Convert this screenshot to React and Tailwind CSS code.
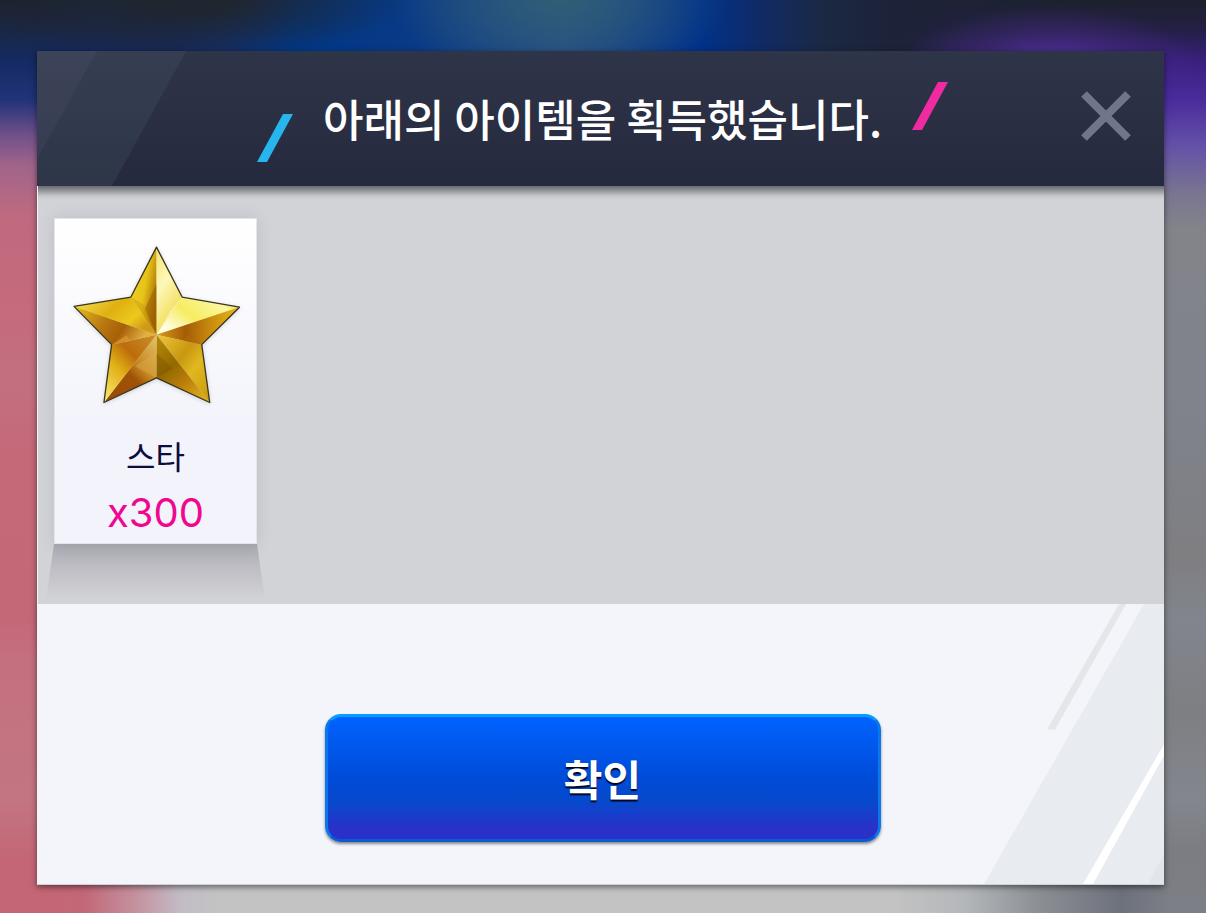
import React from "react";

const Backdrop = () => (
    <div className="absolute inset-0 overflow-hidden" aria-hidden="true">
        <div className="flex h-full">
            <div className="w-1/2 bg-[linear-gradient(to_bottom,#1c222e_0,#1a2642_28px,#142a62_60px,#223378_100px,#70508a_135px,#a0648a_165px,#bf6a80_215px,#c56a7c_300px,#c27080_380px,#c56878_460px,#c46878_620px,#c4707f_660px,#c37582_800px,#c46676_860px,#c46676_100%)]" />
            <div className="w-1/2 bg-[linear-gradient(to_bottom,#1c212d_0,#241f45_30px,#3a2080_62px,#4a2c9c_100px,#6450a8_145px,#7a7690_195px,#83848a_230px,#80838c_400px,#7f7f82_560px,#82858e_620px,#7e7f82_710px,#83868e_800px,#7c7d82_850px,#7c7f86_100%)]" />
        </div>
        {/* Top glow: navy, teal and purple lights */}
        <div className="absolute inset-x-0 top-0 h-20 bg-[radial-gradient(170px_80px_at_560px_0,#2f5e76_0%,#2f5e7680_50%,transparent_100%),radial-gradient(150px_60px_at_1050px_66px,#5530a0_0%,#4a2c8880_50%,transparent_100%),radial-gradient(220px_60px_at_190px_0,#1f2630_20%,#1f263080_60%,transparent_100%),linear-gradient(to_right,transparent_3%,#16285a_14%,#122f6c_19%,#003787_24%,#083a86_34%,#274c86_47%,#00328a_58%,#102a66_63%,#1a2944_68%,#1d2238_74%,transparent_90%)]" />
        {/* Bottom edge */}
        <div className="absolute inset-x-0 bottom-0 h-8 bg-[linear-gradient(to_right,transparent_5%,#c36878_7%,#c48f9c_11%,#c2bcc6_15%,#c3c3c3_18%,#c3c3c3_74%,#b4b7ba_80%,#8c8f94_86%,#6d717c_93%,transparent_97%)]" />
    </div>
);

const Slash = ({ className }) => (
    <svg className={className} width="36" height="48" viewBox="0 0 36 48" fill="currentColor" aria-hidden="true">
        <polygon points="26,0 36,0 10,48 0,48" />
    </svg>
);

const Star = () => (
    <svg className="w-[169px] h-[160px] drop-shadow-sm" viewBox="123 134 508 480" role="img" aria-label="스타">
        <defs>
            <linearGradient id="topL" x1="0" y1="0" x2="1" y2="0.6">
                <stop offset="0" stopColor="#f3d32b" />
                <stop offset="0.6" stopColor="#e6c318" />
                <stop offset="1" stopColor="#a86c04" />
            </linearGradient>
            <linearGradient id="topR" x1="0" y1="0" x2="0.4" y2="1">
                <stop offset="0" stopColor="#f6e36a" />
                <stop offset="0.45" stopColor="#fdf8b8" />
                <stop offset="1" stopColor="#f0d848" />
            </linearGradient>
            <linearGradient id="rightT" x1="0" y1="0.6" x2="1" y2="0">
                <stop offset="0" stopColor="#fffde0" />
                <stop offset="0.35" stopColor="#f6ec60" />
                <stop offset="0.75" stopColor="#fcf7a0" />
                <stop offset="1" stopColor="#e8b81c" />
            </linearGradient>
            <linearGradient id="rightB" x1="0" y1="0" x2="1" y2="0">
                <stop offset="0" stopColor="#d79c18" />
                <stop offset="0.35" stopColor="#a45c08" />
                <stop offset="0.65" stopColor="#c98c0c" />
                <stop offset="1" stopColor="#e9b91a" />
            </linearGradient>
            <linearGradient id="leftT" x1="0" y1="0" x2="1" y2="0.5">
                <stop offset="0" stopColor="#f8e45a" />
                <stop offset="0.5" stopColor="#dfb010" />
                <stop offset="0.8" stopColor="#ecc91c" />
                <stop offset="1" stopColor="#d09a18" />
            </linearGradient>
            <linearGradient id="leftB" x1="0" y1="0" x2="1" y2="0.3">
                <stop offset="0" stopColor="#e9c11e" />
                <stop offset="0.45" stopColor="#b87810" />
                <stop offset="0.7" stopColor="#a86008" />
                <stop offset="1" stopColor="#e0b040" />
            </linearGradient>
            <linearGradient id="botLL" x1="0.9" y1="0" x2="0.1" y2="1">
                <stop offset="0" stopColor="#cc8c24" />
                <stop offset="0.35" stopColor="#bc6c0c" />
                <stop offset="0.6" stopColor="#e0ae14" />
                <stop offset="1" stopColor="#f8e66a" />
            </linearGradient>
            <linearGradient id="botLR" x1="1" y1="0" x2="0.2" y2="1">
                <stop offset="0" stopColor="#e6c468" />
                <stop offset="0.45" stopColor="#c48420" />
                <stop offset="0.6" stopColor="#a05208" />
                <stop offset="1" stopColor="#9a4c08" />
            </linearGradient>
            <linearGradient id="botRL" x1="0" y1="0" x2="0.7" y2="1">
                <stop offset="0" stopColor="#b88a08" />
                <stop offset="0.45" stopColor="#946a00" />
                <stop offset="0.7" stopColor="#b87c08" />
                <stop offset="1" stopColor="#d8a818" />
            </linearGradient>
            <linearGradient id="botRR" x1="0" y1="0" x2="1" y2="1">
                <stop offset="0" stopColor="#f0c838" />
                <stop offset="0.4" stopColor="#c89810" />
                <stop offset="0.6" stopColor="#e0b820" />
                <stop offset="1" stopColor="#c8980c" />
            </linearGradient>
        </defs>
        <g strokeLinejoin="round">
            <polygon points="380,403 303,290 380,140" fill="url(#topL)" />
            <polygon points="380,403 380,140 457,290" fill="url(#topR)" />
            <polygon points="380,403 457,290 630,320" fill="url(#rightT)" />
            <polygon points="380,403 630,320 516,433" fill="url(#rightB)" />
            <polygon points="380,403 516,433 540,607" fill="url(#botRR)" />
            <polygon points="380,403 540,607 380,533" fill="url(#botRL)" />
            <polygon points="380,403 380,533 222,607" fill="url(#botLR)" />
            <polygon points="380,403 222,607 245,433" fill="url(#botLL)" />
            <polygon points="380,403 245,433 132,318" fill="url(#leftB)" />
            <polygon points="380,403 132,318 303,290" fill="url(#leftT)" />
            {/* Darker facets near the centre */}
            <polygon points="380,403 345,325 380,250" fill="#8f5400" opacity="0.45" />
            <polygon points="380,403 303,290 340,312" fill="#c89008" opacity="0.4" />
            <polygon points="380,403 457,290 420,335" fill="#fffbd0" opacity="0.6" />
            <polygon points="245,433 290,405 300,422" fill="#d89a30" opacity="0.7" />
            <polygon points="516,433 470,405 460,421" fill="#b06a08" opacity="0.6" />
            <polygon points="380,533 380,460 430,505" fill="#7c5000" opacity="0.4" />
            <polygon points="380,533 315,498 380,455" fill="#e0b050" opacity="0.4" />
            <polygon
                points="380,140 457,290 630,320 516,433 540,607 380,533 222,607 245,433 132,318 303,290"
                fill="none"
                stroke="#3a3620"
                strokeWidth="4"
            />
        </g>
    </svg>
);

const ItemCard = ({ name, count }) => (
    <li className="relative w-[203px]">
        {/* Floor shadow fanning out below the card */}
        <div className="absolute -inset-x-2 top-full h-14 bg-[linear-gradient(to_bottom,#a9a9b2_0%,#bdbdc3_40%,#d2d3d7_100%)] [clip-path:polygon(8px_0,calc(100%-8px)_0,100%_100%,0_100%)]" />
        <div className="relative flex flex-col items-center pt-[26px] pb-[10px] border border-[#e4e4ea] bg-gradient-to-b from-white to-[#f2f3fb] to-70% shadow-[0_0_14px_rgba(90,90,110,0.16)]">
            <Star />
            <span className="mt-[26px] text-[32px] leading-[48px] text-[#0d0d3c]">{name}</span>
            <span className="mt-[14px] font-['Inter',sans-serif] text-[40px] leading-[40px] text-[#f0068f]">x{count}</span>
        </div>
    </li>
);

const Header = () => (
    <header className="relative grid grid-cols-[1fr_auto_1fr] pt-[31px] pb-6 bg-gradient-to-b from-[#2f3549] to-[#25293d]">
        <svg className="absolute left-0 top-0 h-full w-[150px]" viewBox="0 0 150 135" aria-hidden="true">
            <polygon points="0,0 149,0 75,135 0,135" fill="#5c7484" opacity="0.16" />
            <polygon points="0,0 60,0 0,108" fill="#70688a" opacity="0.13" />
        </svg>
        <div />
        <div className="flex gap-[30px] h-20 pl-1">
            <Slash className="self-end text-[#27b5ee]" />
            <h1 className="text-[44px] leading-[72px] font-medium text-white whitespace-nowrap">
                아래의 아이템을 획득했습니다.
            </h1>
            <Slash className="self-start text-[#f02ba2]" />
        </div>
        <button type="button" aria-label="닫기" className="mt-2 mr-8 self-start justify-self-end text-[#70758a]">
            <svg width="52" height="52" viewBox="0 0 52 52" fill="none" stroke="currentColor" strokeWidth="8" aria-hidden="true">
                <path d="M4 4 L48 48 M48 4 L4 48" />
            </svg>
        </button>
    </header>
);

const App = () => {
    const items = [{ name: "스타", count: 300 }];

    return (
        <div className="relative min-h-screen pt-[51px] pr-[42px] pb-7 pl-[37px] font-['Noto_Sans_CJK_KR',sans-serif]">
            <Backdrop />
            <main className="relative bg-[#f3f5fb] shadow-[0_2px_6px_rgba(0,0,0,0.5)]">
                <Header />

                <ul className="flex flex-wrap gap-4 pt-8 pb-[60px] pl-4 border-l border-[#f3f5fb] bg-[linear-gradient(to_bottom,#6a6b70_0,#97989c_5px,#c6c7cb_10px,#d2d3d7_14px)]">
                    {items.map((item) => (
                        <ItemCard key={item.name} name={item.name} count={item.count} />
                    ))}
                </ul>

                <footer className="relative flex justify-center pt-[110px] pb-[42px] pl-1 border-b border-[#cdd2d6]">
                    <svg className="absolute right-0 top-0 h-full w-[184px]" viewBox="0 0 184 281" preserveAspectRatio="none" aria-hidden="true">
                        <polygon points="164,0 184,0 184,281 4,281" fill="#e8ecf0" />
                        <polygon points="139,0 146,0 75,126 67,126" fill="#e4e6ea" />
                        <polygon points="184,141 184,152 113,281 103,281" fill="#ffffff" />
                        <polygon points="184,251 184,281 168,281" fill="#e1e5ec" />
                    </svg>
                    <button
                        type="button"
                        className="relative w-[556px] h-32 rounded-2xl border-[3px] border-t-[#069cff] border-x-[#0878ea] border-b-[#0a5ad2] bg-[linear-gradient(to_bottom,#0062ff_0%,#0058ec_25%,#004bd8_50%,#0749cc_70%,#2a30c8_92%,#2a30c8_100%)] text-[42px] leading-none font-bold text-white shadow-[0_2px_3px_rgba(0,0,0,0.45)] [text-shadow:0_2px_1px_#00061c]"
                    >
                        확인
                    </button>
                </footer>
            </main>
        </div>
    );
};

export default App;
